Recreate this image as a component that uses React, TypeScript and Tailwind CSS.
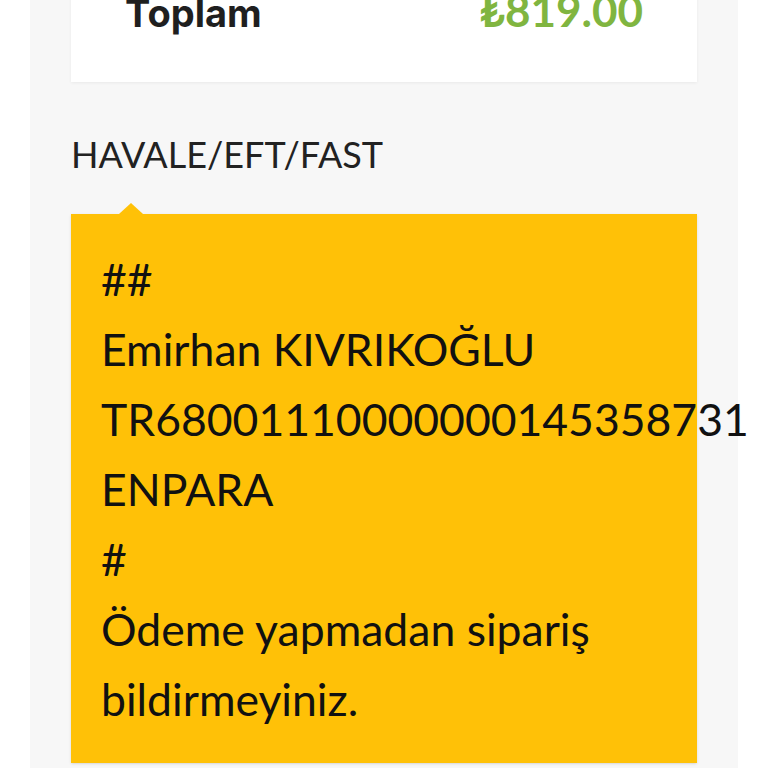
import React from 'react'

const lines = [
  '##',
  'Emirhan KIVRIKOĞLU',
  'TR68001110000000145358731',
  'ENPARA',
  '#',
  'Ödeme yapmadan sipariş bildirmeyiniz.',
]

const App: React.FC = () => {
  return (
    <div className="h-[768px] w-full overflow-hidden bg-white font-['Lato',sans-serif]">
      <div className="mx-[30px] -mt-[30px] bg-[#f7f7f7] px-[41px] pb-[40px]">
        {/* Order total card */}
        <div className="flex items-baseline justify-between bg-white px-[54px] pt-[20px] pb-[49px] shadow-[0_1px_3px_rgba(0,0,0,0.06)]">
          <span className="font-['Inter',sans-serif] text-[38px] leading-[40px] font-bold text-[#1f1f1f]">
            Toplam
          </span>
          <span className="text-[44px] leading-[40px] font-bold text-[#80b540]">
            ₺819.00
          </span>
        </div>

        {/* Payment method */}
        <h3 className="mt-[51px] mb-[38px] text-[36px] leading-[1.2] font-normal text-[#222]">
          HAVALE/EFT/FAST
        </h3>

        <div className="relative bg-[#ffc107] pt-[30px] pr-[31px] pb-[29px] pl-[30px] shadow-sm">
          <div className="absolute -top-[11px] left-[48px] h-0 w-0 border-x-[12px] border-b-[11px] border-x-transparent border-b-[#ffc107]" />
          {lines.map((line) => (
            <p key={line} className="text-[44.5px] leading-[70px] text-[#111] whitespace-nowrap [&:last-child]:whitespace-normal">
              {line}
            </p>
          ))}
        </div>
      </div>
    </div>
  )
}

export default App
